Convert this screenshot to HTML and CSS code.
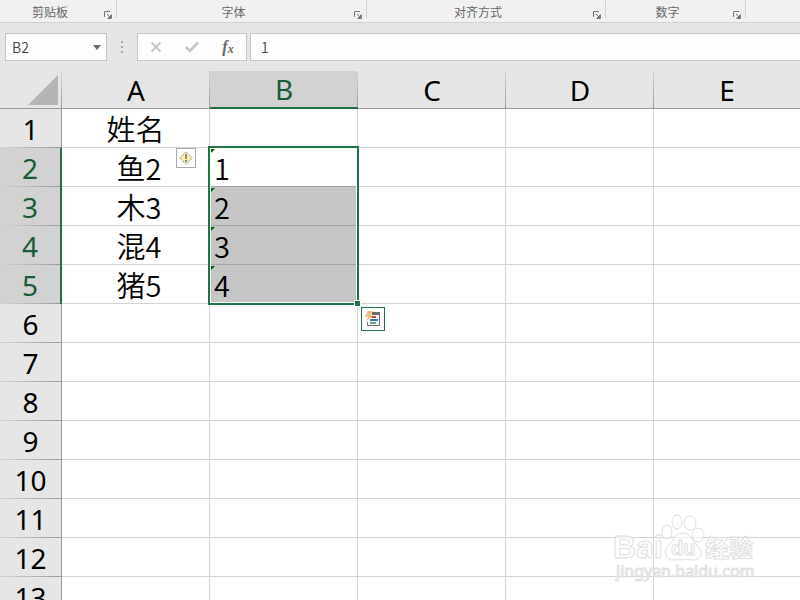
FILE: index.html
```html
<!DOCTYPE html>
<html lang="zh-CN">

<head>
    <meta charset="UTF-8">
    <meta name="viewport" content="width=device-width, initial-scale=1.0">
    <title>工作表</title>
    <link rel="stylesheet" href="styles.css">
</head>

<body>
    <!-- 功能区 -->
    <div class="ribbon">
        <div class="group clipboard">
            <span class="group-name">剪贴板</span>
            <button class="launcher" aria-label="剪贴板设置"><svg width="8" height="8"><path d="M.5 6V.5H6" /><path d="M3 3l3 3M3.500 7.500h4v-4" /><path class="solid" d="M7 4v3H4z" /></svg></button>
        </div>
        <div class="group font">
            <span class="group-name">字体</span>
            <button class="launcher" aria-label="字体设置"><svg width="8" height="8"><path d="M.5 6V.5H6" /><path d="M3 3l3 3M3.500 7.500h4v-4" /><path class="solid" d="M7 4v3H4z" /></svg></button>
        </div>
        <div class="group align">
            <span class="group-name">对齐方式</span>
            <button class="launcher" aria-label="对齐设置"><svg width="8" height="8"><path d="M.5 6V.5H6" /><path d="M3 3l3 3M3.500 7.500h4v-4" /><path class="solid" d="M7 4v3H4z" /></svg></button>
        </div>
        <div class="group number">
            <span class="group-name">数字</span>
            <button class="launcher" aria-label="数字设置"><svg width="8" height="8"><path d="M.5 6V.5H6" /><path d="M3 3l3 3M3.500 7.500h4v-4" /><path class="solid" d="M7 4v3H4z" /></svg></button>
        </div>
    </div>

    <!-- 编辑栏 -->
    <div class="formula-bar">
        <div class="name-box">
            <input class="name-input" type="text" value="B2" aria-label="名称框">
            <button class="name-arrow" aria-label="选择名称"><svg width="8" height="5"><path d="M0 0h8L4 5z" fill="#6a6a6a" /></svg></button>
        </div>
        <svg class="grip" width="2" height="12"><path d="M0 0h2v2H0zM0 5h2v2H0zM0 10h2v2H0z" fill="#a6a6a6" /></svg>
        <div class="tools">
            <button class="tool" aria-label="取消"><svg width="12" height="12"><path d="M1.500 1.500l9 9M10.500 1.500l-9 9" fill="none" stroke="#c4c4c4" stroke-width="2" /></svg></button>
            <button class="tool" aria-label="输入"><svg width="14" height="12"><path d="M1 6l4 4 8-8.500" fill="none" stroke="#c4c4c4" stroke-width="2.600" /></svg></button>
            <button class="tool fx" aria-label="插入函数">f<span class="fx-x">x</span></button>
        </div>
        <input class="formula" type="text" value="1" aria-label="编辑栏">
    </div>

    <!-- 表格 -->
    <div class="sheet">
        <table class="grid">
            <colgroup>
                <col class="col-head">
                <col class="col-data">
                <col class="col-data">
                <col class="col-data">
                <col class="col-data">
                <col>
            </colgroup>
            <thead>
                <tr>
                    <th class="corner"><svg width="30" height="30"><path d="M30 0v30H0z" fill="#b4b4b4" /></svg></th>
                    <th>A</th>
                    <th class="active">B</th>
                    <th>C</th>
                    <th>D</th>
                    <th>E</th>
                </tr>
            </thead>
            <tbody>
                <tr><th>1</th><td class="name">姓名</td><td></td><td></td><td></td><td></td></tr>
                <tr>
                    <th class="active">2</th>
                    <td class="name person">鱼2
                        <button class="warning" aria-label="错误提示"><svg width="14" height="14"><path d="M7 .7L13.300 7 7 13.300.7 7z" fill="#fbf0a8" stroke="#8c8c8c" stroke-dasharray="1.500 .6" /><path d="M6 3h2v5H6zM6 9h2v2H6z" fill="#888" /></svg></button>
                    </td>
                    <td class="value first">1
                        <div class="selection"><span class="handle"></span></div>
                        <button class="quick" aria-label="快速分析"><svg width="16" height="16"><path d="M7 2.500h7.500v12h-12V11" fill="none" stroke="#6e6e6e" /><path d="M7 1h8v3H7z" fill="#6e6e6e" /><path d="M3 0h5L5.500 4H8L1 11l2-5H0z" fill="#ecc07e" /><path d="M7 5h4v2H6z" fill="#d24b2b" /><path d="M5 8h8v2H5z" fill="#3f76b5" /><path d="M5 11h6v2H5z" fill="#62a28b" /></svg></button>
                    </td>
                    <td></td><td></td><td></td>
                </tr>
                <tr><th class="active">3</th><td class="name person">木3</td><td class="value picked">2</td><td></td><td></td><td></td></tr>
                <tr><th class="active">4</th><td class="name person">混4</td><td class="value picked">3</td><td></td><td></td><td></td></tr>
                <tr><th class="active">5</th><td class="name person">猪5</td><td class="value picked">4</td><td></td><td></td><td></td></tr>
                <tr><th>6</th><td></td><td></td><td></td><td></td><td></td></tr>
                <tr><th>7</th><td></td><td></td><td></td><td></td><td></td></tr>
                <tr><th>8</th><td></td><td></td><td></td><td></td><td></td></tr>
                <tr><th>9</th><td></td><td></td><td></td><td></td><td></td></tr>
                <tr><th>10</th><td></td><td></td><td></td><td></td><td></td></tr>
                <tr><th>11</th><td></td><td></td><td></td><td></td><td></td></tr>
                <tr><th>12</th><td></td><td></td><td></td><td></td><td></td></tr>
                <tr><th>13</th><td></td><td></td><td></td><td></td><td></td></tr>
            </tbody>
        </table>
    </div>

    <!-- 水印 -->
    <svg class="watermark" width="150" height="74">
        <g class="outline">
            <ellipse cx="55" cy="22" rx="5" ry="7" />
            <ellipse cx="65" cy="12" rx="5" ry="7" />
            <ellipse cx="78" cy="13" rx="6" ry="7" />
            <ellipse cx="86" cy="25" rx="6" ry="7" />
            <path d="M71 23c-8 0-9 7-14 12-6 6-4 15 4 15 5 0 13-1 20 0 9 0 10-9 5-14-6-5-7-13-15-13z" />
            <text class="brand" x="1" y="48">Bai</text>
            <text class="du" x="59" y="45">du</text>
            <text class="brand-cn" x="93" y="47">经验</text>
            <text class="site" x="4" y="67">jingyan.baidu.com</text>
        </g>
    </svg>
</body>

</html>
```

FILE: styles.css
```css
* {
    margin: 0;
    padding: 0;
    box-sizing: border-box;
}

body {
    height: 100vh;
    display: flex;
    flex-direction: column;
    overflow: hidden;
    position: relative;
    background: #e6e6e6;
    font-family: "Noto Sans", "Noto Sans CJK SC", sans-serif;
    font-size: 12px;
}

button,
input {
    border: 0;
    background: none;
    font: inherit;
    color: inherit;
}

/* 功能区 */
.ribbon {
    height: 23px;
    flex: none;
    display: flex;
    align-items: flex-start;
    background: #f1f1f1;
    border-bottom: 1px solid #d2d2d2;
    color: #666;
    font-family: "Noto Sans CJK SC", sans-serif;
}

.group {
    height: 18px;
    display: flex;
    border-right: 1px solid #d2d2d2;
}

.clipboard {
    width: 117px;
}

.font {
    width: 250px;
}

.align {
    width: 239px;
}

.number {
    width: 140px;
}

.group-name {
    flex: 1;
    line-height: 23px;
    text-align: center;
}

.launcher {
    width: 16px;
    height: 19px;
    padding: 11px 4px 0;
}

.launcher svg {
    display: block;
    fill: none;
    stroke: #777;
}

.launcher .solid {
    fill: #777;
}

/* 编辑栏 */
.formula-bar {
    height: 48px;
    flex: none;
    display: flex;
    align-items: flex-start;
    padding: 10px 0 0 5px;
    color: #444;
}

.name-box,
.tools,
.formula {
    height: 28px;
    background: #fdfdfd;
    border: 1px solid #c6c6c6;
}

.name-box {
    width: 102px;
    display: flex;
}

.name-input {
    flex: 1;
    min-width: 0;
    padding-left: 6px;
    font-family: "Noto Sans CJK SC", sans-serif;
    font-size: 14px;
    font-weight: 350;
}

.name-arrow {
    width: 18px;
}

.name-arrow svg {
    display: block;
    margin-left: 5px;
}

.grip {
    margin: 8px 14px;
}

.tools {
    width: 110px;
    display: flex;
}

.tool {
    flex: 1;
    display: flex;
    justify-content: center;
    align-items: center;
}

.fx {
    font-family: "Liberation Serif", serif;
    font-size: 16px;
    font-style: italic;
    font-weight: bold;
    color: #666;
}

.fx-x {
    padding-top: 4px;
    font-size: 12px;
}

.formula {
    flex: 1;
    min-width: 0;
    margin-left: 3px;
    padding-left: 10px;
    border-right: 0;
    font-family: "Noto Sans CJK SC", sans-serif;
    font-size: 14px;
    font-weight: 350;
}

/* 表格 */
.sheet {
    flex: 1;
    min-height: 0;
    overflow: hidden;
    background: #fff;
}

.grid {
    width: 100%;
    table-layout: fixed;
    border-collapse: separate;
    border-spacing: 0;
    font-size: 28px;
    line-height: 38px;
    color: #000;
}

.col-head {
    width: 62px;
}

.col-data {
    width: 148px;
}

.grid th {
    height: 39px;
    background: linear-gradient(to right, #d4d4d4, #999) bottom / 100% 1px no-repeat #e6e6e6;
    border-right: 1px solid #999;
    font-weight: normal;
}

.grid thead th {
    height: 38px;
    line-height: 36px;
    background: linear-gradient(#d4d4d4, #999) right / 1px 100% no-repeat #e6e6e6;
    border-right: 0;
    border-bottom: 1px solid #999;
}

.grid thead .corner {
    padding: 4px 4px 3px 28px;
}

.corner svg {
    display: block;
}

.grid th.active {
    background-color: #d2d2d2;
    color: #185c37;
    border-right: 2px solid #217346;
}

.grid thead th.active {
    background-color: #d2d2d2;
    border-right: 0;
    border-bottom: 2px solid #217346;
}

.grid td {
    position: relative;
    height: 39px;
    border-right: 1px solid #d4d4d4;
    border-bottom: 1px solid #d4d4d4;
    font-family: "Noto Sans CJK SC", sans-serif;
    font-size: 29px;
    font-weight: 350;
}

.grid td:last-child {
    border-right: 0;
}

.grid thead th:last-child {
    background: #e6e6e6;
}

.grid .name {
    text-align: center;
}

.grid .person {
    padding-left: 7px;
}

.grid .value {
    padding-left: 4px;
}

.grid .picked {
    background: #c6c6c6;
    border-bottom-color: #a6a6a6;
}

.grid .first {
    border-bottom-color: #a6a6a6;
}

/* 单元格左上角的绿色三角 */
.value::before {
    content: '';
    position: absolute;
    left: 1px;
    top: 1px;
    border-top: 4px solid #006100;
    border-right: 4px solid transparent;
}

.selection {
    position: absolute;
    left: -2px;
    top: -2px;
    z-index: 1;
    width: 151px;
    height: 159px;
    border: 2px solid #217346;
    box-shadow: inset 0 0 0 1px #fff;
}

.handle {
    position: absolute;
    right: -4px;
    bottom: -4px;
    width: 7px;
    height: 7px;
    background: #217346;
    border: 1px solid #fff;
}

.warning {
    position: absolute;
    right: 13px;
    top: 0;
    width: 20px;
    height: 20px;
    display: flex;
    justify-content: center;
    align-items: center;
    background: #fff;
    border: 1px solid #ababab;
}

.quick {
    position: absolute;
    left: 151px;
    top: 159px;
    z-index: 2;
    width: 24px;
    height: 24px;
    display: flex;
    justify-content: center;
    align-items: center;
    background: #fff;
    border: 1px solid #217346;
}

/* 水印 */
.watermark {
    position: absolute;
    right: 38px;
    bottom: 16px;
    z-index: 3;
}

.outline {
    fill: rgba(255, 255, 255, 0.6);
    stroke: #dedede;
}

.brand {
    font-family: "Liberation Sans", sans-serif;
    font-size: 32px;
    font-weight: bold;
}

.du {
    font-family: "Liberation Sans", sans-serif;
    font-size: 20px;
    font-weight: bold;
}

.brand-cn {
    font-family: "Noto Sans CJK SC", sans-serif;
    font-size: 24px;
    font-weight: bold;
}

.site {
    font-family: "Noto Sans", sans-serif;
    font-size: 16px;
}
```
